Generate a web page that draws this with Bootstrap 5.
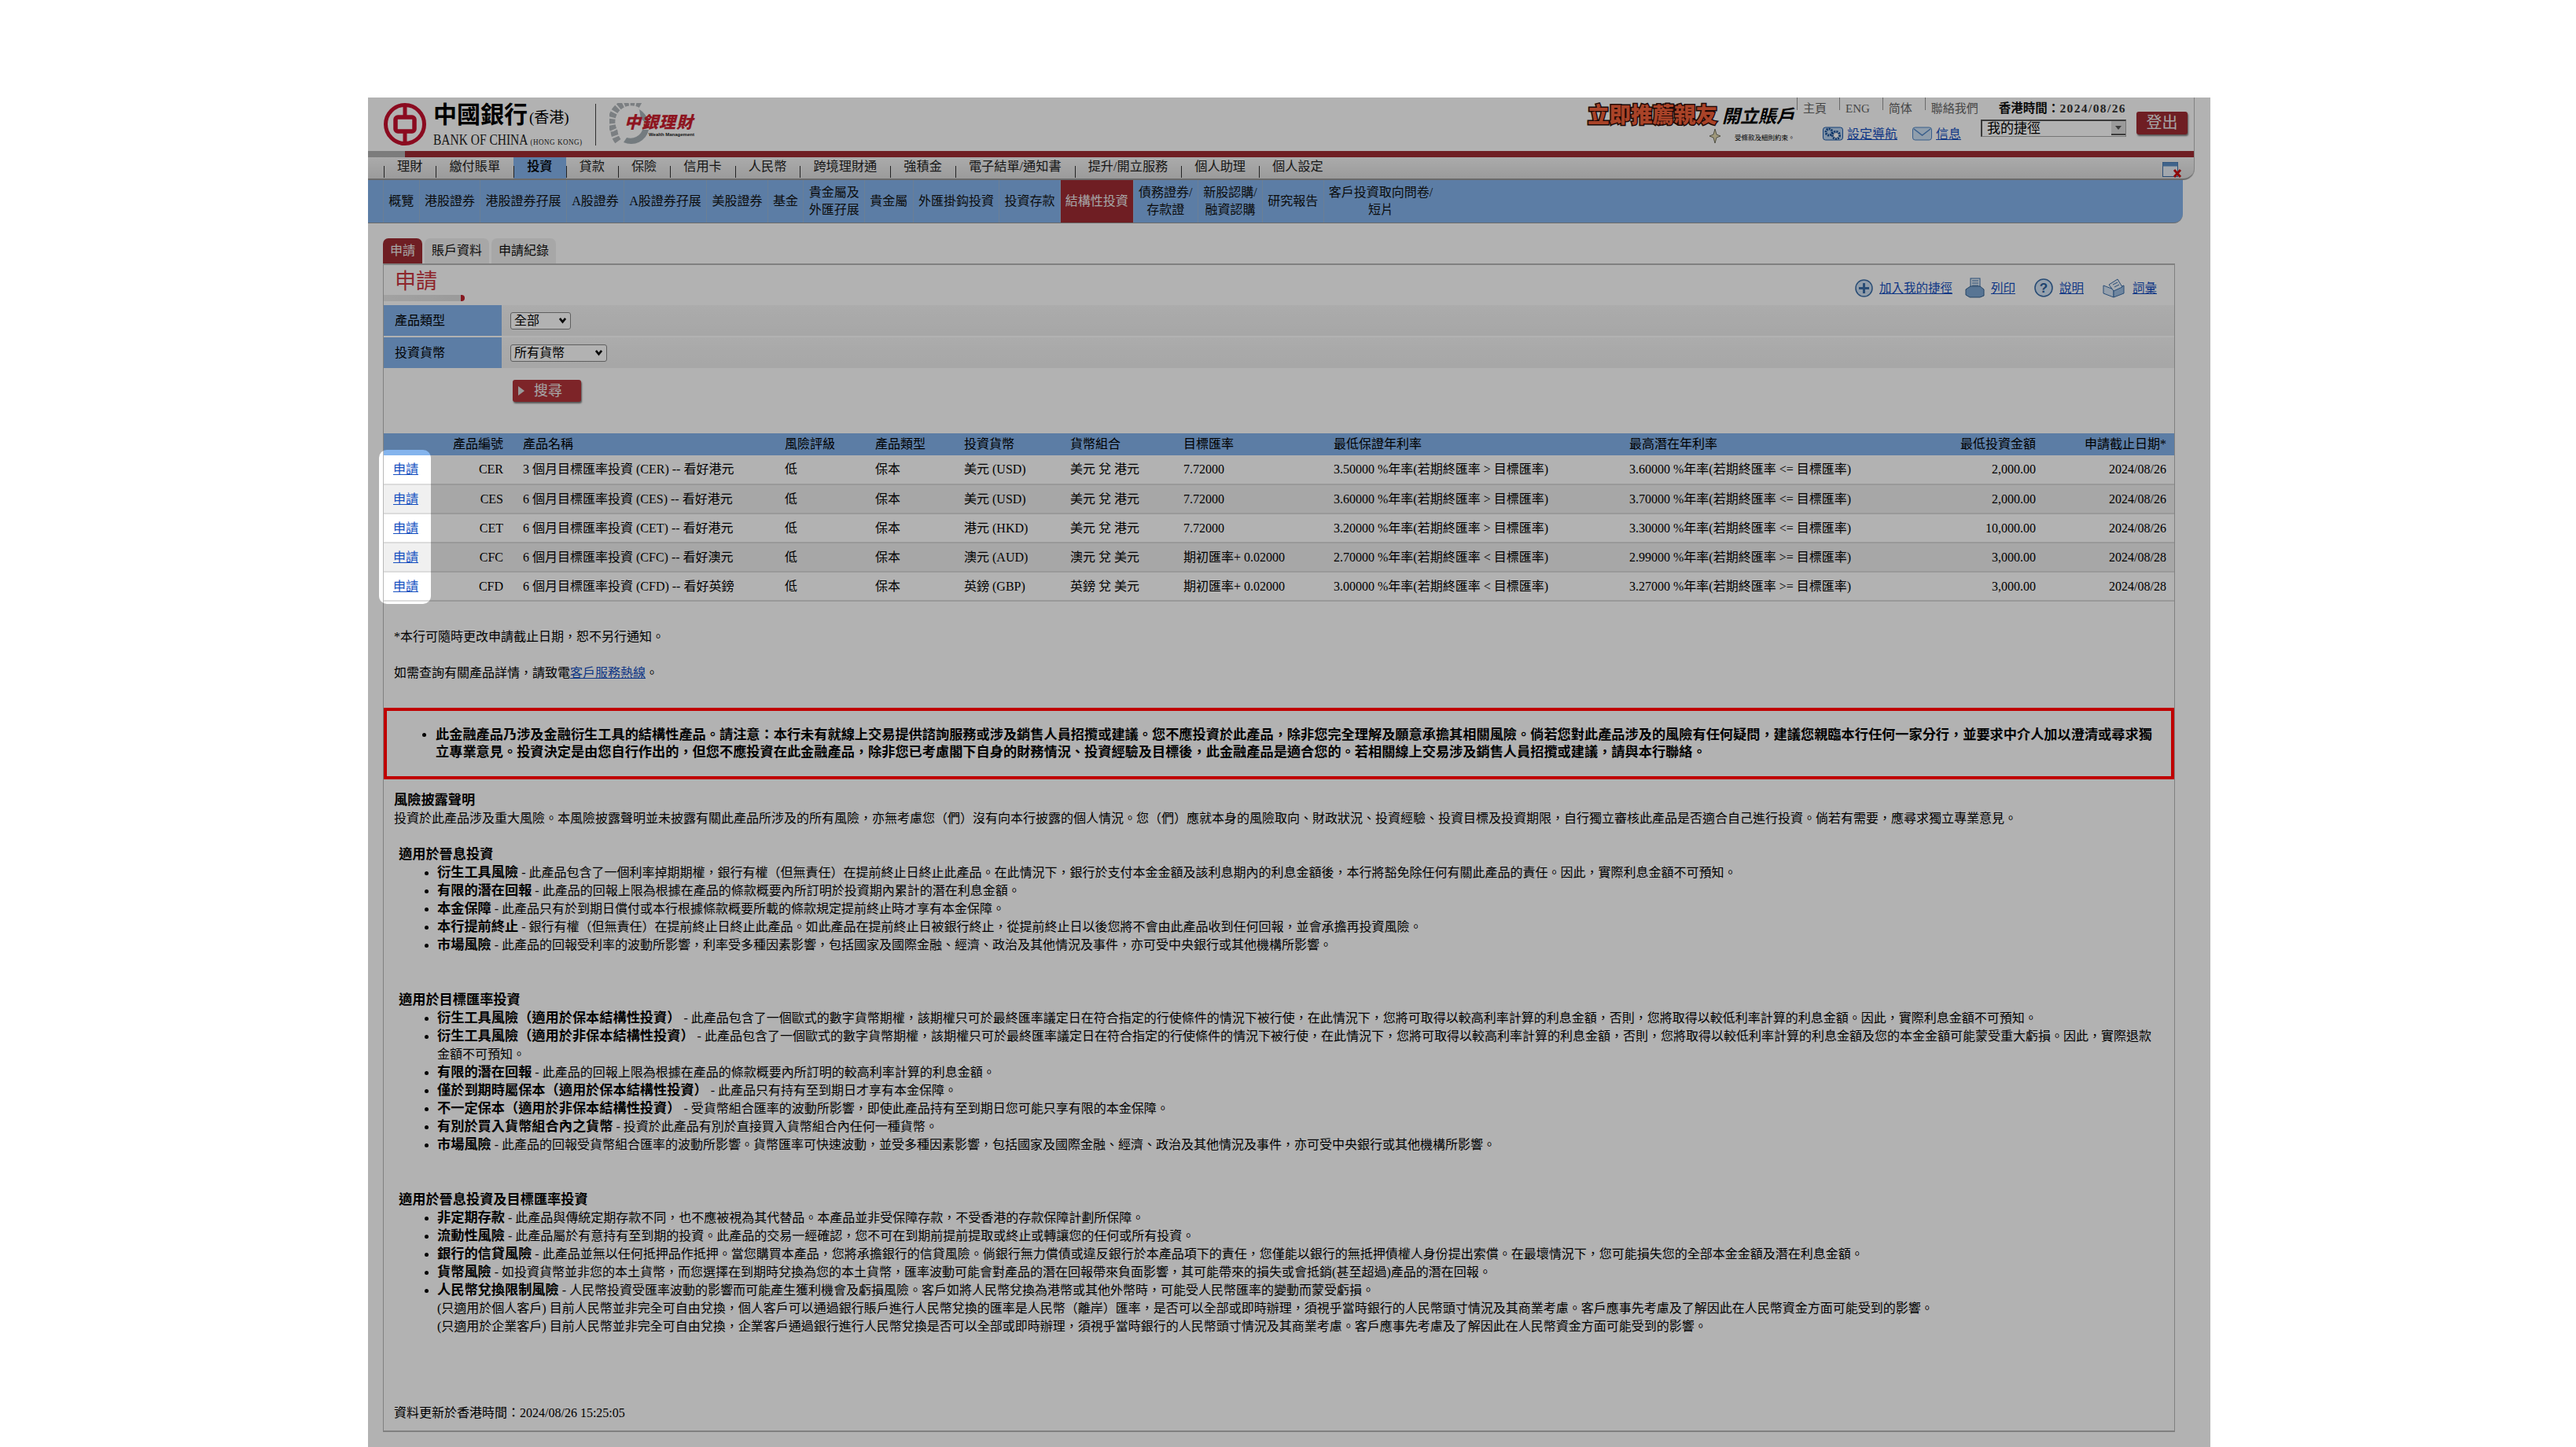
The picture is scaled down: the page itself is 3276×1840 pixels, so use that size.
<!DOCTYPE html>
<html lang="zh-Hant">
<head>
  <meta charset="UTF-8"/>
  <meta name="viewport" content="width=device-width, initial-scale=1.0"/>
  <title>申請 - 結構性投資</title>
  <link href="https://cdn.jsdelivr.net/npm/bootstrap@5.3.0/dist/css/bootstrap.min.css" rel="stylesheet"/>
  <script src="https://cdn.jsdelivr.net/npm/bootstrap@5.3.0/dist/js/bootstrap.bundle.min.js" defer></script>
  <style>
    :root {
      --boc-red: #9f2c33;
      --boc-blue: #84b4ed;
      --link-blue: #1650c0;
      --soft-row: #f0f0f0;
      --edge-grey: #b8b8b8;
    }

    body {
      background-color: #fff;
      color: #000;
      font-family: "Liberation Serif", "Noto Sans CJK TC", serif;
      font-size: 16px;
      line-height: 23px;
      margin: 0;
    }

    a { color: var(--link-blue); }

    /* the dimmed application frame */
    .app-frame {
      position: relative;
      overflow: hidden;
      margin: 124px 0 0 468px;
      width: 2343px;
      height: 1716px;
      background: #fff;
    }

    .spotlight {
      position: absolute;
      left: 14px;
      top: 448px;
      width: 66px;
      height: 196px;
      border-radius: 10px;
      box-shadow: 0 0 0 4000px rgba(0, 0, 0, .3);
      pointer-events: none;
      z-index: 5;
    }

    /* header */
    .site-top {
      width: 2323px;
      border-right: 1px solid #bbb;
      border-bottom-right-radius: 14px;
    }

    .brand-row { height: 68px; }

    .brand-logo { margin: 0 0 0 20px; }

    .brand-name { margin-left: 9px; width: 192px; }

    .brand-zh {
      font-size: 30px;
      line-height: 38px;
      font-weight: 700;
      white-space: nowrap;
    }

    .brand-zh span { font-size: 19px; font-weight: 400; margin-left: 2px; }

    .brand-en {
      font-size: 18px;
      line-height: 18px;
      white-space: nowrap;
      transform-origin: left;
      transform: scaleX(.86);
      color: #222;
    }

    .brand-en span { font-size: 10.5px; letter-spacing: .6px; }

    .brand-rule { width: 1px; height: 53px; background: #444; margin: 0 17px 0 14px; }

    .promo-box { width: 264px; margin-left: auto; }

    .promo-main { white-space: nowrap; line-height: 34px; height: 34px; margin-top: 6px; }

    .promo-red {
      font-size: 27.5px;
      font-weight: 900;
      color: #f2603a;
      -webkit-text-stroke: 3px #2a0c08;
      paint-order: stroke fill;
    }

    .promo-black { font-size: 23px; font-weight: 700; font-style: italic; margin-left: 6px; }

    .promo-note { font-size: 8.5px; line-height: 14px; margin-left: 155px; white-space: nowrap; }

    .promo-note svg { margin-right: 18px; vertical-align: -4px; }

    .util-box { width: 419px; margin-left: 2px; }

    .util-links { height: 26px; font-size: 15px; }

    .util-links a {
      color: #666;
      text-decoration: none;
      border-left: 1px solid #999;
      height: 16px;
      padding-left: 7px;
      line-height: 28px;
      align-self: flex-start;
    }

    .clock-text { margin-left: auto; font-weight: 700; font-size: 15.5px; line-height: 28px; white-space: nowrap; color: #111; }

    .clock-text span { letter-spacing: 1.4px; color: #333; }

    .util-tools { height: 26px; }

    .tool-group { padding: 14px 0 0 33px; gap: 5px; }

    .tool-link { font-size: 16px; white-space: nowrap; }

    .tool-mail { margin-left: 14px; }

    .shortcut-box { position: relative; width: 185px; height: 22px; margin-left: auto; }

    .shortcut-select {
      width: 185px;
      height: 22px;
      padding: 0 20px 0 6px;
      font-size: 17px;
      line-height: 20px;
      border-radius: 0;
      border: 1px solid #aaa;
      border-top: 2px solid #555;
      border-left: 2px solid #555;
      background-image: none;
      color: #000;
      font-family: inherit;
    }

    .shortcut-caret {
      position: absolute;
      right: 1px;
      top: 2px;
      width: 18px;
      height: 18px;
      background: #ddd;
      border-bottom: 2px solid #555;
      pointer-events: none;
    }

    .shortcut-caret::after {
      content: "";
      position: absolute;
      left: 5px;
      top: 6px;
      border: 4px solid transparent;
      border-top: 5px solid #555;
    }

    .logout-btn {
      width: 65px;
      height: 29px;
      margin: 18px 8px 0 13px;
      padding: 0;
      border: none;
      border-radius: 3px;
      background: var(--boc-red);
      color: #eee;
      font-size: 20px;
      line-height: 29px;
      box-shadow: 1px 2px 2px rgba(0, 0, 0, .5);
    }

    .red-rail { height: 8px; background: linear-gradient(to right, #b2b2b2 47px, var(--boc-red) 47px); }

    .main-menu {
      height: 29px;
      padding-left: 20px;
      background: linear-gradient(#f5f5f5, #dedede);
      border-bottom: 2px solid #999;
      border-bottom-right-radius: 14px;
      position: relative;
      flex-wrap: nowrap;
    }

    .main-menu .nav-link {
      position: relative;
      height: 27px;
      padding: 0 17px;
      font-size: 16.2px;
      line-height: 25px;
      color: #222;
      white-space: nowrap;
    }

    .main-menu .nav-link::before {
      content: "";
      position: absolute;
      left: 0;
      bottom: 1px;
      height: 15px;
      border-left: 1px solid #333;
    }

    .main-menu .nav-link.active { background: var(--boc-blue); color: #000; font-weight: 500; }

    .win-icon { position: absolute; right: 15px; top: 6px; }

    .sub-menu {
      width: 2308px;
      height: 55px;
      padding-left: 19px;
      background: var(--boc-blue);
      border-bottom: 1px solid #999;
      border-bottom-right-radius: 12px;
      flex-wrap: nowrap;
    }

    .sub-menu .nav-link {
      display: flex;
      align-items: center;
      height: 54px;
      padding: 0 6.3px;
      font-size: 16px;
      line-height: 22px;
      text-align: center;
      color: #111;
      white-space: nowrap;
      border-left: 1px solid #9ab6d6;
    }

    .sub-menu .nav-link.active { background: var(--boc-red); color: #eee; padding: 0 6px; }

    /* tabs and panel */
    .page-tabs { margin: 19px 0 0 19px; gap: 3px; height: 32px; }

    .page-tabs .nav-link {
      height: 32px;
      padding: 0 9px;
      font-size: 16px;
      line-height: 32px;
      color: #111;
      background: var(--soft-row);
      border-radius: 7px 7px 0 0;
      white-space: nowrap;
    }

    .page-tabs .nav-link.active { background: var(--boc-red); color: #eee; }

    .main-panel {
      width: 2279px;
      height: 1486px;
      margin-left: 19px;
      border: 1px solid var(--edge-grey);
      border-top-width: 2px;
      border-bottom-width: 2px;
    }

    .title-row { height: 51px; padding-right: 22px; }

    .title-box { width: 103px; position: relative; padding-left: 14px; height: 42px; }

    .title-text { color: #cc3540; font-size: 27px; line-height: 34px; }

    .title-bar {
      position: absolute;
      left: 0;
      bottom: 0;
      width: 103px;
      height: 8px;
      background: linear-gradient(to right, #e8e8e8, #dedede);
      border-right: 5px solid #c0232e;
      border-radius: 0 4px 4px 0;
    }

    .action-link { font-size: 15.5px; white-space: nowrap; }

    .form-line { height: 39px; margin-bottom: 2px; background: linear-gradient(#f6f6f6, #efefef); }

    .form-tag {
      width: 150px;
      padding-left: 14px;
      background: var(--boc-blue);
      line-height: 39px;
    }

    .form-field { padding-left: 11px; }

    .pick-box {
      height: 22px;
      padding: 0 20px 0 4px;
      font-size: 16px;
      line-height: 20px;
      border: 1px solid #888;
      border-radius: 3px;
      background-image: url("data:image/svg+xml,%3csvg xmlns='http://www.w3.org/2000/svg' viewBox='0 0 12 10'%3e%3cpath fill='none' stroke='%23111' stroke-width='3' d='M2 2l4 5 4-5'/%3e%3c/svg%3e");
      background-size: 11px 9px;
      background-position: right 4px center;
      font-family: inherit;
      color: #000;
    }

    .pick-short { width: 77px; }

    .pick-long { width: 123px; }

    .search-btn {
      display: flex;
      align-items: center;
      gap: 12px;
      width: 87px;
      height: 28px;
      margin: 15px 0 0 164px;
      padding: 0 0 0 7px;
      border: none;
      border-radius: 3px;
      background: #b4343a;
      color: #eee;
      font-size: 18px;
      box-shadow: 1px 2px 2px rgba(0, 0, 0, .5);
    }

    .search-btn i { border: 6px solid transparent; border-left: 8px solid #ddd; border-right: 0; }

    /* result table */
    .fund-grid { table-layout: fixed; width: 2277px; margin: 40px 0 0; }

    .fund-grid th, .fund-grid td {
      padding: 0 10px;
      font-size: 16px;
      font-weight: 400;
      white-space: nowrap;
      vertical-align: middle;
      line-height: 20px;
    }

    .fund-grid th { height: 28px; background-color: var(--boc-blue); color: #000; border: 0; }

    .fund-grid td { height: 37px; background-color: #fff; color: #000; border-bottom: 2px solid #dcdcdc; }

    .fund-grid tbody tr:nth-child(even) > td { background-color: var(--soft-row); }

    .fund-grid .cell-pad { padding-left: 12px; }

    .fund-grid .cell-right { text-align: right; padding-right: 15px; }

    .fund-grid .cell-date { text-align: right; }

    .c-apply { width: 72px; }
    .c-code { width: 95px; }
    .c-name { width: 333px; }
    .c-risk { width: 115px; }
    .c-type { width: 113px; }
    .c-cur { width: 135px; }
    .c-pair { width: 144px; }
    .c-target { width: 191px; }
    .c-min { width: 376px; }
    .c-max { width: 388px; }
    .c-amount { width: 154px; }
    .c-date { width: 161px; }

    /* notes and disclosures */
    .text-wrap { padding: 0 13px; }

    .note-line { margin: 0 0 23px; }

    .note-first { margin-top: 33px; }

    .warn-box {
      position: relative;
      height: 91px;
      margin: 33px -13px 15px;
      padding: 0 12px 0 66px;
      font-size: 17.2px;
      font-weight: 700;
      line-height: 22px;
    }

    .warn-box::after {
      content: "";
      position: absolute;
      inset: 0;
      border: 4px solid #c00000;
      z-index: 6;
      pointer-events: none;
    }

    .warn-box ul { margin: 0; padding: 0; }

    .risk-title { font-size: 17.2px; font-weight: 700; margin: 0; }

    .risk-intro { margin: 0 0 23px; }

    .risk-head { font-size: 17.2px; font-weight: 700; margin: 0 0 0 6px; }

    .risk-list { margin: 0 0 47px; padding: 0 10px 0 55px; }

    .risk-list b { font-size: 17.2px; }

    .risk-last { margin-bottom: 87px; }

    .stamp-line { margin: 0; }
  </style>
</head>
<body>

<div class="app-frame">
  <div class="spotlight"></div>

  <div class="site-top">
    <div class="brand-row d-flex align-items-center">
      <svg class="brand-logo" width="54" height="54" viewBox="0 0 54 54">
        <circle cx="27" cy="27" r="24.5" fill="none" stroke="#c8102e" stroke-width="5"/>
        <rect x="24.5" y="3" width="5" height="48" fill="#c8102e"/>
        <rect x="15" y="18" width="24" height="18" rx="3" fill="#fff" stroke="#c8102e" stroke-width="5.5"/>
        <rect x="21" y="24" width="12" height="6" fill="#fff"/>
      </svg>
      <div class="brand-name">
        <div class="brand-zh">中國銀行<span>(香港)</span></div>
        <div class="brand-en">BANK OF CHINA <span>(HONG KONG)</span></div>
      </div>
      <div class="brand-rule"></div>
      <svg width="110" height="54" viewBox="0 0 110 54">
        <path d="M40 2 A25 25 0 0 0 6 36 A25 25 0 0 0 12 50" fill="none" stroke="#b0b6ba" stroke-width="9" stroke-dasharray="6 2"/>
        <path d="M32 6 A23 23 0 0 1 50 28 L40 20 L38 8 Z" fill="#a6b0b6"/>
        <path d="M18 50 A23 23 0 0 0 50 34 L42 34 A16 16 0 0 1 22 44 Z" fill="#a6b0b6"/>
        <text x="19" y="32" font-size="21" font-weight="900" font-style="italic" fill="#cc1e2e" textLength="87" font-family="Noto Sans CJK TC">中銀理財</text>
        <text x="50" y="42" font-size="6" font-weight="700" fill="#222" font-family="Liberation Sans">Wealth Management</text>
      </svg>

      <div class="promo-box align-self-start">
        <div class="promo-main"><span class="promo-red">立即推薦親友</span><span class="promo-black">開立賬戶</span></div>
        <div class="promo-note"><svg width="14" height="18" viewBox="0 0 14 18"><polygon points="7,0 9,7 14,9 9,11 7,18 5,11 0,9 5,7" fill="#e6dcb0" stroke="#554" stroke-width=".8"/></svg>受條款及細則約束。</div>
      </div>

      <div class="util-box align-self-start">
        <div class="util-links d-flex gap-3">
          <a href="#">主頁</a><a href="#">ENG</a><a href="#">简体</a><a href="#">聯絡我們</a>
          <div class="clock-text">香港時間&#65306;<span>2024/08/26</span></div>
        </div>
        <div class="util-tools d-flex align-items-center">
          <div class="tool-group d-flex align-items-center">
            <svg class="flex-shrink-0" width="26" height="20" viewBox="0 0 26 20">
              <rect x=".5" y="2" width="25" height="16" rx="3" fill="#bcd6f2" stroke="#1d5aa8"/>
              <circle cx="8" cy="8" r="4" fill="none" stroke="#174f96" stroke-width="3" stroke-dasharray="2 1"/>
              <circle cx="17" cy="12" r="4.5" fill="#fff" stroke="#174f96" stroke-width="3" stroke-dasharray="2 1"/>
            </svg>
            <a class="tool-link" href="#">設定導航</a>
            <svg class="tool-mail flex-shrink-0" width="25" height="20" viewBox="0 0 25 20">
              <rect x=".5" y="2" width="24" height="16" rx="3" fill="#cfe2f7" stroke="#4f86c6"/>
              <path d="M2 4 L12.5 12 L23 4" fill="none" stroke="#4f86c6" stroke-width="1.4"/>
            </svg>
            <a class="tool-link" href="#">信息</a>
          </div>
          <div class="shortcut-box">
            <select class="form-select shortcut-select"><option>我的捷徑</option></select>
            <span class="shortcut-caret"></span>
          </div>
        </div>
      </div>

      <button type="button" class="btn logout-btn align-self-start">登出</button>
    </div>
    <div class="red-rail"></div>
    <ul class="nav main-menu">
      <li class="nav-item"><a class="nav-link" href="#">理財</a></li>
      <li class="nav-item"><a class="nav-link" href="#">繳付賬單</a></li>
      <li class="nav-item"><a class="nav-link active" href="#">投資</a></li>
      <li class="nav-item"><a class="nav-link" href="#">貸款</a></li>
      <li class="nav-item"><a class="nav-link" href="#">保險</a></li>
      <li class="nav-item"><a class="nav-link" href="#">信用卡</a></li>
      <li class="nav-item"><a class="nav-link" href="#">人民幣</a></li>
      <li class="nav-item"><a class="nav-link" href="#">跨境理財通</a></li>
      <li class="nav-item"><a class="nav-link" href="#">強積金</a></li>
      <li class="nav-item"><a class="nav-link" href="#">電子結單/通知書</a></li>
      <li class="nav-item"><a class="nav-link" href="#">提升/開立服務</a></li>
      <li class="nav-item"><a class="nav-link" href="#">個人助理</a></li>
      <li class="nav-item"><a class="nav-link" href="#">個人設定</a></li>
      <svg class="win-icon" width="25" height="20" viewBox="0 0 25 20">
        <rect x=".5" y=".5" width="19" height="18" fill="#e8f0f8" stroke="#3d6ea8"/>
        <rect x=".5" y=".5" width="19" height="5" fill="#5b8fc8"/>
        <path d="M15 10 L23 19 M23 10 L15 19" stroke="#cc1111" stroke-width="3"/>
      </svg>
    </ul>
  </div>

  <ul class="nav sub-menu">
    <li class="nav-item"><a class="nav-link" href="#">概覽</a></li>
    <li class="nav-item"><a class="nav-link" href="#">港股證券</a></li>
    <li class="nav-item"><a class="nav-link" href="#">港股證券孖展</a></li>
    <li class="nav-item"><a class="nav-link" href="#">A股證券</a></li>
    <li class="nav-item"><a class="nav-link" href="#">A股證券孖展</a></li>
    <li class="nav-item"><a class="nav-link" href="#">美股證券</a></li>
    <li class="nav-item"><a class="nav-link" href="#">基金</a></li>
    <li class="nav-item"><a class="nav-link" href="#">貴金屬及<br>外匯孖展</a></li>
    <li class="nav-item"><a class="nav-link" href="#">貴金屬</a></li>
    <li class="nav-item"><a class="nav-link" href="#">外匯掛鈎投資</a></li>
    <li class="nav-item"><a class="nav-link" href="#">投資存款</a></li>
    <li class="nav-item"><a class="nav-link active" href="#">結構性投資</a></li>
    <li class="nav-item"><a class="nav-link" href="#">債務證券/<br>存款證</a></li>
    <li class="nav-item"><a class="nav-link" href="#">新股認購/<br>融資認購</a></li>
    <li class="nav-item"><a class="nav-link" href="#">研究報告</a></li>
    <li class="nav-item"><a class="nav-link" href="#">客戶投資取向問卷/<br>短片</a></li>
  </ul>

  <ul class="nav page-tabs">
    <li class="nav-item"><a class="nav-link active" href="#">申請</a></li>
    <li class="nav-item"><a class="nav-link" href="#">賬戶資料</a></li>
    <li class="nav-item"><a class="nav-link" href="#">申請紀錄</a></li>
  </ul>

  <div class="main-panel">
    <div class="title-row d-flex align-items-start justify-content-between">
      <div class="title-box mt-1">
        <div class="title-text">申請</div>
        <div class="title-bar"></div>
      </div>
      <div class="d-flex align-items-center mt-3">
        <svg class="me-2" width="23" height="23" viewBox="0 0 23 23">
          <circle cx="11.5" cy="11.5" r="10.5" fill="#cfe0f2" stroke="#3b6ea8" stroke-width="1.5"/>
          <path d="M11.5 5 V18 M5 11.5 H18" stroke="#3b6ea8" stroke-width="3"/>
        </svg>
        <a class="action-link" href="#">加入我的捷徑</a>
        <svg class="ms-3 me-2" width="25" height="26" viewBox="0 0 25 26">
          <rect x="7" y="1" width="12" height="12" fill="#e4eef8" stroke="#3b6ea8"/>
          <path d="M9 4 H17 M9 7 H17 M9 10 H17" stroke="#3b6ea8"/>
          <path d="M1 15 L7 11 H19 L24 15 V23 L19 25 H6 L1 22 Z" fill="#7fa8d4" stroke="#34618f"/>
        </svg>
        <a class="action-link" href="#">列印</a>
        <svg class="ms-4 me-2" width="24" height="26" viewBox="0 0 24 26">
          <circle cx="12" cy="13" r="11" fill="#d6e6f6" stroke="#3b6ea8" stroke-width="1.6"/>
          <text x="12" y="19" font-size="17" font-weight="700" text-anchor="middle" fill="#2b5f9c" font-family="Liberation Sans">?</text>
        </svg>
        <a class="action-link" href="#">說明</a>
        <svg class="ms-4 me-2" width="30" height="25" viewBox="0 0 30 25">
          <path d="M1 9 L14 14 V24 L1 19 Z" fill="#d6e6f6" stroke="#3b6ea8"/>
          <path d="M14 14 L27 9 V19 L14 24 Z" fill="#9fc1e4" stroke="#3b6ea8"/>
          <path d="M8 8 L19 1 L25 11 L14 16 Z" fill="#eef5fc" stroke="#3b6ea8"/>
          <path d="M13 8 L19 5 M15 11 L21 8" stroke="#3b6ea8"/>
        </svg>
        <a class="action-link" href="#">詞彙</a>
      </div>
    </div>

    <div class="form-line d-flex align-items-center">
      <div class="form-tag">產品類型</div>
      <div class="form-field">
        <select class="form-select pick-box pick-short"><option>全部</option></select>
      </div>
    </div>
    <div class="form-line d-flex align-items-center">
      <div class="form-tag">投資貨幣</div>
      <div class="form-field">
        <select class="form-select pick-box pick-long"><option>所有貨幣</option></select>
      </div>
    </div>
    <button type="button" class="btn search-btn"><i></i>搜尋</button>

    <table class="table fund-grid">
      <colgroup>
        <col class="c-apply"><col class="c-code"><col class="c-name"><col class="c-risk">
        <col class="c-type"><col class="c-cur"><col class="c-pair"><col class="c-target">
        <col class="c-min"><col class="c-max"><col class="c-amount"><col class="c-date">
      </colgroup>
      <thead>
        <tr>
          <th></th><th class="cell-right">產品編號</th><th>產品名稱</th><th>風險評級</th>
          <th>產品類型</th><th>投資貨幣</th><th>貨幣組合</th><th>目標匯率</th>
          <th>最低保證年利率</th><th>最高潛在年利率</th><th class="cell-right">最低投資金額</th><th class="cell-date">申請截止日期*</th>
        </tr>
      </thead>
      <tbody>
        <tr>
          <td class="cell-pad"><a href="#">申請</a></td><td class="cell-right">CER</td><td>3 個月目標匯率投資 (CER) -- 看好港元</td><td>低</td><td>保本</td><td>美元 (USD)</td><td>美元 兌 港元</td><td>7.72000</td>
          <td>3.50000 %年率(若期終匯率 &gt; 目標匯率)</td><td>3.60000 %年率(若期終匯率 &lt;= 目標匯率)</td><td class="cell-right">2,000.00</td><td class="cell-date">2024/08/26</td>
        </tr>
        <tr>
          <td class="cell-pad"><a href="#">申請</a></td><td class="cell-right">CES</td><td>6 個月目標匯率投資 (CES) -- 看好港元</td><td>低</td><td>保本</td><td>美元 (USD)</td><td>美元 兌 港元</td><td>7.72000</td>
          <td>3.60000 %年率(若期終匯率 &gt; 目標匯率)</td><td>3.70000 %年率(若期終匯率 &lt;= 目標匯率)</td><td class="cell-right">2,000.00</td><td class="cell-date">2024/08/26</td>
        </tr>
        <tr>
          <td class="cell-pad"><a href="#">申請</a></td><td class="cell-right">CET</td><td>6 個月目標匯率投資 (CET) -- 看好港元</td><td>低</td><td>保本</td><td>港元 (HKD)</td><td>美元 兌 港元</td><td>7.72000</td>
          <td>3.20000 %年率(若期終匯率 &gt; 目標匯率)</td><td>3.30000 %年率(若期終匯率 &lt;= 目標匯率)</td><td class="cell-right">10,000.00</td><td class="cell-date">2024/08/26</td>
        </tr>
        <tr>
          <td class="cell-pad"><a href="#">申請</a></td><td class="cell-right">CFC</td><td>6 個月目標匯率投資 (CFC) -- 看好澳元</td><td>低</td><td>保本</td><td>澳元 (AUD)</td><td>澳元 兌 美元</td><td>期初匯率+ 0.02000</td>
          <td>2.70000 %年率(若期終匯率 &lt; 目標匯率)</td><td>2.99000 %年率(若期終匯率 &gt;= 目標匯率)</td><td class="cell-right">3,000.00</td><td class="cell-date">2024/08/28</td>
        </tr>
        <tr>
          <td class="cell-pad"><a href="#">申請</a></td><td class="cell-right">CFD</td><td>6 個月目標匯率投資 (CFD) -- 看好英鎊</td><td>低</td><td>保本</td><td>英鎊 (GBP)</td><td>英鎊 兌 美元</td><td>期初匯率+ 0.02000</td>
          <td>3.00000 %年率(若期終匯率 &lt; 目標匯率)</td><td>3.27000 %年率(若期終匯率 &gt;= 目標匯率)</td><td class="cell-right">3,000.00</td><td class="cell-date">2024/08/28</td>
        </tr>
      </tbody>
    </table>

    <div class="text-wrap">
      <p class="note-line note-first">*本行可隨時更改申請截止日期&#65292;恕不另行通知。</p>
      <p class="note-line">如需查詢有關產品詳情&#65292;請致電<a href="#">客戶服務熱線</a>。</p>

      <div class="warn-box d-flex align-items-center">
        <ul>
          <li>此金融產品乃涉及金融衍生工具的結構性產品。請注意&#65306;本行未有就線上交易提供諮詢服務或涉及銷售人員招攬或建議。您不應投資於此產品&#65292;除非您完全理解及願意承擔其相關風險。倘若您對此產品涉及的風險有任何疑問&#65292;建議您親臨本行任何一家分行&#65292;並要求中介人加以澄清或尋求獨立專業意見。投資決定是由您自行作出的&#65292;但您不應投資在此金融產品&#65292;除非您已考慮閣下自身的財務情況、投資經驗及目標後&#65292;此金融產品是適合您的。若相關線上交易涉及銷售人員招攬或建議&#65292;請與本行聯絡。</li>
        </ul>
      </div>

      <p class="risk-title">風險披露聲明</p>
      <p class="risk-intro">投資於此產品涉及重大風險。本風險披露聲明並未披露有關此產品所涉及的所有風險&#65292;亦無考慮您&#65288;們&#65289;沒有向本行披露的個人情況。您&#65288;們&#65289;應就本身的風險取向、財政狀況、投資經驗、投資目標及投資期限&#65292;自行獨立審核此產品是否適合自己進行投資。倘若有需要&#65292;應尋求獨立專業意見。</p>

      <p class="risk-head">適用於晉息投資</p>
      <ul class="risk-list">
        <li><b>衍生工具風險</b> - 此產品包含了一個利率掉期期權&#65292;銀行有權&#65288;但無責任&#65289;在提前終止日終止此產品。在此情況下&#65292;銀行於支付本金金額及該利息期內的利息金額後&#65292;本行將豁免除任何有關此產品的責任。因此&#65292;實際利息金額不可預知。</li>
        <li><b>有限的潛在回報</b> - 此產品的回報上限為根據在產品的條款概要內所訂明於投資期內累計的潛在利息金額。</li>
        <li><b>本金保障</b> - 此產品只有於到期日償付或本行根據條款概要所載的條款規定提前終止時才享有本金保障。</li>
        <li><b>本行提前終止</b> - 銀行有權&#65288;但無責任&#65289;在提前終止日終止此產品。如此產品在提前終止日被銀行終止&#65292;從提前終止日以後您將不會由此產品收到任何回報&#65292;並會承擔再投資風險。</li>
        <li><b>市場風險</b> - 此產品的回報受利率的波動所影響&#65292;利率受多種因素影響&#65292;包括國家及國際金融、經濟、政治及其他情況及事件&#65292;亦可受中央銀行或其他機構所影響。</li>
      </ul>

      <p class="risk-head">適用於目標匯率投資</p>
      <ul class="risk-list">
        <li><b>衍生工具風險&#65288;適用於保本結構性投資&#65289;</b> - 此產品包含了一個歐式的數字貨幣期權&#65292;該期權只可於最終匯率議定日在符合指定的行使條件的情況下被行使&#65292;在此情況下&#65292;您將可取得以較高利率計算的利息金額&#65292;否則&#65292;您將取得以較低利率計算的利息金額。因此&#65292;實際利息金額不可預知。</li>
        <li><b>衍生工具風險&#65288;適用於非保本結構性投資&#65289;</b> - 此產品包含了一個歐式的數字貨幣期權&#65292;該期權只可於最終匯率議定日在符合指定的行使條件的情況下被行使&#65292;在此情況下&#65292;您將可取得以較高利率計算的利息金額&#65292;否則&#65292;您將取得以較低利率計算的利息金額及您的本金金額可能蒙受重大虧損。因此&#65292;實際退款金額不可預知。</li>
        <li><b>有限的潛在回報</b> - 此產品的回報上限為根據在產品的條款概要內所訂明的較高利率計算的利息金額。</li>
        <li><b>僅於到期時屬保本&#65288;適用於保本結構性投資&#65289;</b> - 此產品只有持有至到期日才享有本金保障。</li>
        <li><b>不一定保本&#65288;適用於非保本結構性投資&#65289;</b> - 受貨幣組合匯率的波動所影響&#65292;即使此產品持有至到期日您可能只享有限的本金保障。</li>
        <li><b>有別於買入貨幣組合內之貨幣</b> - 投資於此產品有別於直接買入貨幣組合內任何一種貨幣。</li>
        <li><b>市場風險</b> - 此產品的回報受貨幣組合匯率的波動所影響。貨幣匯率可快速波動&#65292;並受多種因素影響&#65292;包括國家及國際金融、經濟、政治及其他情況及事件&#65292;亦可受中央銀行或其他機構所影響。</li>
      </ul>

      <p class="risk-head">適用於晉息投資及目標匯率投資</p>
      <ul class="risk-list risk-last">
        <li><b>非定期存款</b> - 此產品與傳統定期存款不同&#65292;也不應被視為其代替品。本產品並非受保障存款&#65292;不受香港的存款保障計劃所保障。</li>
        <li><b>流動性風險</b> - 此產品屬於有意持有至到期的投資。此產品的交易一經確認&#65292;您不可在到期前提前提取或終止或轉讓您的任何或所有投資。</li>
        <li><b>銀行的信貸風險</b> - 此產品並無以任何抵押品作抵押。當您購買本產品&#65292;您將承擔銀行的信貸風險。倘銀行無力償債或違反銀行於本產品項下的責任&#65292;您僅能以銀行的無抵押債權人身份提出索償。在最壞情況下&#65292;您可能損失您的全部本金金額及潛在利息金額。</li>
        <li><b>貨幣風險</b> - 如投資貨幣並非您的本土貨幣&#65292;而您選擇在到期時兌換為您的本土貨幣&#65292;匯率波動可能會對產品的潛在回報帶來負面影響&#65292;其可能帶來的損失或會抵銷(甚至超過)產品的潛在回報。</li>
        <li><b>人民幣兌換限制風險</b> - 人民幣投資受匯率波動的影響而可能產生獲利機會及虧損風險。客戶如將人民幣兌換為港幣或其他外幣時&#65292;可能受人民幣匯率的變動而蒙受虧損。<br>
        (只適用於個人客戶) 目前人民幣並非完全可自由兌換&#65292;個人客戶可以通過銀行賬戶進行人民幣兌換的匯率是人民幣&#65288;離岸&#65289;匯率&#65292;是否可以全部或即時辦理&#65292;須視乎當時銀行的人民幣頭寸情況及其商業考慮。客戶應事先考慮及了解因此在人民幣資金方面可能受到的影響。<br>
        (只適用於企業客戶) 目前人民幣並非完全可自由兌換&#65292;企業客戶通過銀行進行人民幣兌換是否可以全部或即時辦理&#65292;須視乎當時銀行的人民幣頭寸情況及其商業考慮。客戶應事先考慮及了解因此在人民幣資金方面可能受到的影響。</li>
      </ul>

      <p class="stamp-line">資料更新於香港時間&#65306;2024/08/26 15:25:05</p>
    </div>
  </div>
</div>

</body>
</html>
